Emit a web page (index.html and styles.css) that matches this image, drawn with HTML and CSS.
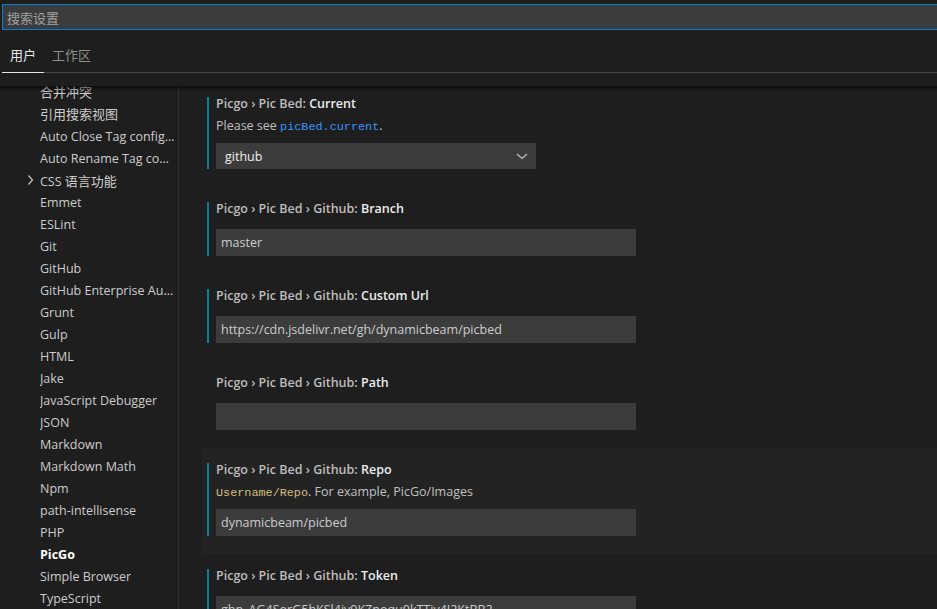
FILE: index.html
```html
<!DOCTYPE html>
<html lang="zh-CN">
<head>
<meta charset="utf-8">
<title>设置</title>
<link rel="stylesheet" href="styles.css">
</head>
<body>
<div class="editor">
  <div class="header">
    <div class="search"><span class="placeholder">搜索设置</span></div>
    <div class="tabs">
      <div class="tab active">用户</div>
      <div class="tab">工作区</div>
    </div>
  </div>
  <div class="body">
    <nav class="toc">
      <div class="toc-inner">
        <div class="toc-row"><span class="twistie"></span><span class="toc-label cjk">合并冲突</span></div>
        <div class="toc-row"><span class="twistie"></span><span class="toc-label cjk">引用搜索视图</span></div>
        <div class="toc-row"><span class="twistie"></span><span class="toc-label">Auto Close Tag configuration</span></div>
        <div class="toc-row"><span class="twistie"></span><span class="toc-label">Auto Rename Tag configuration</span></div>
        <div class="toc-row"><span class="twistie"><svg width="16" height="16" viewBox="0 0 16 16"><path d="M6.5 3.5 L10.5 8 L6.5 12.5" fill="none" stroke="#c5c5c5" stroke-width="1.2"/></svg></span><span class="toc-label">CSS <span class="cjk">语言功能</span></span></div>
        <div class="toc-row"><span class="twistie"></span><span class="toc-label">Emmet</span></div>
        <div class="toc-row"><span class="twistie"></span><span class="toc-label">ESLint</span></div>
        <div class="toc-row"><span class="twistie"></span><span class="toc-label">Git</span></div>
        <div class="toc-row"><span class="twistie"></span><span class="toc-label">GitHub</span></div>
        <div class="toc-row"><span class="twistie"></span><span class="toc-label">GitHub Enterprise Authentication</span></div>
        <div class="toc-row"><span class="twistie"></span><span class="toc-label">Grunt</span></div>
        <div class="toc-row"><span class="twistie"></span><span class="toc-label">Gulp</span></div>
        <div class="toc-row"><span class="twistie"></span><span class="toc-label">HTML</span></div>
        <div class="toc-row"><span class="twistie"></span><span class="toc-label">Jake</span></div>
        <div class="toc-row"><span class="twistie"></span><span class="toc-label">JavaScript Debugger</span></div>
        <div class="toc-row"><span class="twistie"></span><span class="toc-label">JSON</span></div>
        <div class="toc-row"><span class="twistie"></span><span class="toc-label">Markdown</span></div>
        <div class="toc-row"><span class="twistie"></span><span class="toc-label">Markdown Math</span></div>
        <div class="toc-row"><span class="twistie"></span><span class="toc-label">Npm</span></div>
        <div class="toc-row"><span class="twistie"></span><span class="toc-label">path-intellisense</span></div>
        <div class="toc-row"><span class="twistie"></span><span class="toc-label">PHP</span></div>
        <div class="toc-row selected"><span class="twistie"></span><span class="toc-label">PicGo</span></div>
        <div class="toc-row"><span class="twistie"></span><span class="toc-label">Simple Browser</span></div>
        <div class="toc-row"><span class="twistie"></span><span class="toc-label">TypeScript</span></div>
      </div>
    </nav>
    <main class="list">
      <div class="list-inner">
        <div class="item modified">
          <div class="title"><span class="cat">Picgo › Pic Bed: </span><span class="key">Current</span></div>
          <div class="desc">Please see <code class="link">picBed.current</code>.</div>
          <div class="select">
            <span>github</span>
            <svg class="chev" width="16" height="16" viewBox="0 0 16 16"><path d="M3 6 L8 10.5 L13 6" fill="none" stroke="#c5c5c5" stroke-width="1.2"/></svg>
          </div>
        </div>
        <div class="item modified">
          <div class="title"><span class="cat">Picgo › Pic Bed › Github: </span><span class="key">Branch</span></div>
          <div class="input no-desc">master</div>
        </div>
        <div class="item modified">
          <div class="title"><span class="cat">Picgo › Pic Bed › Github: </span><span class="key">Custom Url</span></div>
          <div class="input no-desc">https://cdn.jsdelivr.net/gh/dynamicbeam/picbed</div>
        </div>
        <div class="item">
          <div class="title"><span class="cat">Picgo › Pic Bed › Github: </span><span class="key">Path</span></div>
          <div class="input no-desc"></div>
        </div>
        <div class="item modified hover">
          <div class="title"><span class="cat">Picgo › Pic Bed › Github: </span><span class="key">Repo</span></div>
          <div class="desc"><code class="pre">Username/Repo</code>. For example, PicGo/Images</div>
          <div class="input">dynamicbeam/picbed</div>
        </div>
        <div class="item modified">
          <div class="title"><span class="cat">Picgo › Pic Bed › Github: </span><span class="key">Token</span></div>
          <div class="input no-desc">ghp_AG4SorG5hKSl4iv9KZpoqu9kTTiv4J2KtBB2</div>
        </div>
      </div>
    </main>
    <div class="shadow"></div>
  </div>
</div>
</body>
</html>
```

FILE: styles.css
```css
* { box-sizing: border-box; }

html, body {
  margin: 0;
  padding: 0;
  background: #1e1e1e;
  height: 100%;
  overflow: hidden;
}

body {
  font-family: "Open Sans", "Noto Sans CJK SC", sans-serif;
  font-size: 12.5px;
  color: #cccccc;
}

.cjk {
  font-family: "Noto Sans CJK SC", sans-serif;
  font-size: 13px;
}

.editor {
  display: flex;
  flex-direction: column;
  height: 609px;
}

.header {
  padding-top: 4px;
  padding-left: 2px;
  height: 86px;
  flex: none;
}

.search {
  height: 26px;
  width: calc(100% + 10px);
  border: 1px solid #007fd4;
  background: #3c3c3c;
  padding-left: 4px;
  display: flex;
  align-items: center;
  font-family: "Noto Sans CJK SC", sans-serif;
  font-size: 13px;
}

.placeholder { color: #a0a0a0; }

.tabs {
  display: flex;
  border-bottom: 1px solid #454545;
  height: 43px;
}

.tab {
  padding: 16px 8px 8px;
  line-height: 18px;
  font-family: "Noto Sans CJK SC", sans-serif;
  font-size: 13px;
  color: #8f8f8f;
  margin-bottom: -1px;
  border-bottom: 1px solid transparent;
}

.tab.active {
  color: #e7e7e7;
  border-bottom-color: #e7e7e7;
}

.body {
  position: relative;
  flex: 1;
  display: flex;
  overflow: hidden;
}

.shadow {
  position: absolute;
  left: 0;
  right: 0;
  top: 0;
  height: 6px;
  background: linear-gradient(to bottom, rgba(0,0,0,0.55), rgba(0,0,0,0));
  pointer-events: none;
}

.toc {
  width: 179px;
  flex: none;
  border-right: 1px solid #303030;
  overflow: hidden;
}

.toc-inner { margin-top: -5px; }

.toc-row {
  display: flex;
  align-items: center;
  height: 22px;
  padding-top: 2px;
  padding-left: 22px;
  padding-right: 3px;
  color: #cccccc;
  line-height: 18px;
}

.twistie {
  width: 18px;
  flex: none;
  display: flex;
  align-items: center;
  margin-top: -2px;
}

.toc-label {
  white-space: nowrap;
  overflow: hidden;
  text-overflow: ellipsis;
}

.toc-label.cjk { margin-top: -2px; }

.toc-row.selected { color: #ffffff; font-weight: 700; }

.list {
  flex: 1;
  padding-left: 23px;
  overflow: hidden;
}

.list-inner { margin-top: -4px; }

.item {
  position: relative;
  padding: 12px 0 18px 14px;
}

.item.hover { background: #232323; }

.item.modified::before {
  content: "";
  position: absolute;
  left: 5px;
  top: 15px;
  bottom: 18px;
  width: 2px;
  background: #0c7d9d;
}

.title {
  line-height: 20px;
  height: 18px;
  font-weight: 600;
  white-space: nowrap;
}

.cat { color: #bdbdbd; }
.key { color: #ececec; }

.desc {
  margin-top: 4px;
  line-height: 20px;
  height: 18px;
  color: #c0c0c0;
  white-space: nowrap;
}

code {
  font-family: "Liberation Mono", monospace;
  font-size: 11.8px;
  line-height: 1;
}

.link { color: #3794ff; }
.pre { color: #d7ba7d; }

.input {
  margin-top: 9px;
  width: 420px;
  height: 27px;
  background: #3c3c3c;
  padding-left: 5px;
  line-height: 28px;
  color: #cccccc;
  white-space: nowrap;
  overflow: hidden;
}

.input.no-desc { margin-top: 12px; }

.select {
  margin-top: 9px;
  width: 320px;
  height: 26px;
  background: #3c3c3c;
  padding: 0 6px 0 9px;
  display: flex;
  align-items: center;
  justify-content: space-between;
  color: #f0f0f0;
}
```
